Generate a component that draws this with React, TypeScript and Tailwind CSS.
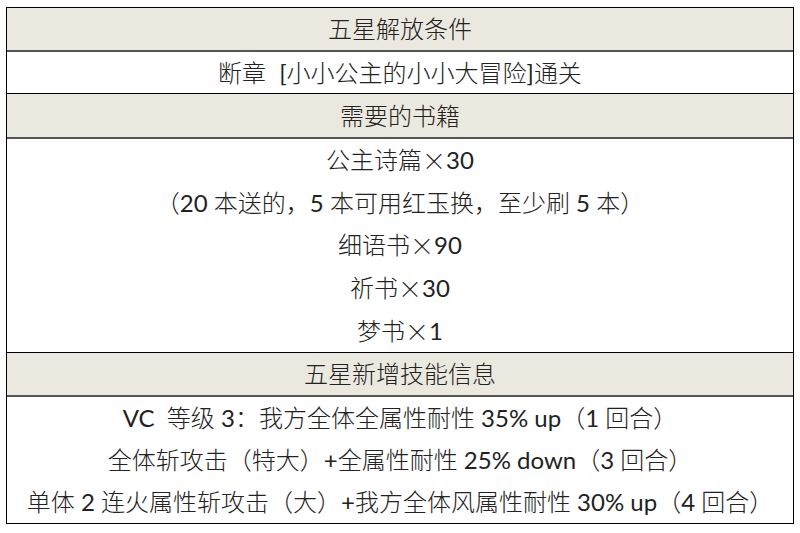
import React from 'react';

const font = { fontFamily: '"Lato", "Noto Sans CJK SC", sans-serif' };

function Line({ children }: { children: React.ReactNode }) {
  return <div className="flex flex-1 items-center justify-center whitespace-pre">{children}</div>;
}

// latin bits in regular weight, CJK stays light
const L = ({ children }: { children: React.ReactNode }) => <span className="font-normal">{children}</span>;
const X = () => <span className="font-['Noto_Sans_CJK_SC']">×</span>;

export default function App() {
  return (
    <div className="w-[800px] h-[533px] bg-white pt-[7px] pl-[6px]" style={font}>
      <div className="w-[788px] flex flex-col border border-black text-[24px] text-[#222] leading-none font-light">
        <div className="h-[44px] flex items-center justify-center bg-[#ebe9df] border-b-2 border-[#555]">五星解放条件</div>
        <div className="h-[42px] flex items-center justify-center border-b border-black whitespace-pre">断章  <L>[</L>小小公主的小小大冒险<L>]</L>通关</div>
        <div className="h-[45px] flex items-center justify-center bg-[#ebe9df] border-b-2 border-[#555]">需要的书籍</div>
        <div className="h-[214px] flex flex-col border-b border-black">
          <Line>公主诗篇<X /><L>30</L></Line>
          <Line>（<L>20 </L>本送的，<L>5 </L>本可用红玉换，至少刷<L> 5 </L>本）</Line>
          <Line>细语书<X /><L>90</L></Line>
          <Line>祈书<X /><L>30</L></Line>
          <Line>梦书<X /><L>1</L></Line>
        </div>
        <div className="h-[44px] flex items-center justify-center bg-[#ebe9df] border-b-2 border-[#555]">五星新增技能信息</div>
        <div className="h-[126px] flex flex-col">
          <Line><L>VC  </L>等级<L> 3</L>：我方全体全属性耐性<L> 35% up</L>（<L>1 </L>回合）</Line>
          <Line>全体斩攻击（特大）<L>+</L>全属性耐性<L> 25% down</L>（<L>3 </L>回合）</Line>
          <Line>单体<L> 2 </L>连火属性斩攻击（大）<L>+</L>我方全体风属性耐性<L> 30% up</L>（<L>4 </L>回合）</Line>
        </div>
      </div>
    </div>
  );
}
